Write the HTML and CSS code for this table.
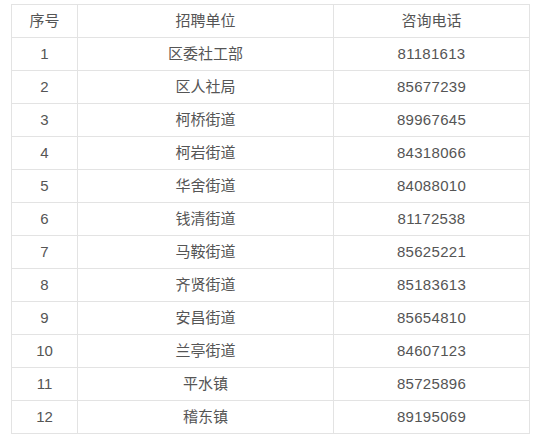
FILE: index.html
```html
<!DOCTYPE html>
<html lang="zh">
<head>
<meta charset="utf-8">
<link rel="stylesheet" href="styles.css">
</head>
<body>
<table class="tbl">
<colgroup><col class="c1"><col class="c2"><col class="c3"></colgroup>
<tr><td>序号</td><td>招聘单位</td><td>咨询电话</td></tr>
<tr><td>1</td><td>区委社工部</td><td class="num">81181613</td></tr>
<tr><td>2</td><td>区人社局</td><td class="num">85677239</td></tr>
<tr><td>3</td><td>柯桥街道</td><td class="num">89967645</td></tr>
<tr><td>4</td><td>柯岩街道</td><td class="num">84318066</td></tr>
<tr><td>5</td><td>华舍街道</td><td class="num">84088010</td></tr>
<tr><td>6</td><td>钱清街道</td><td class="num">81172538</td></tr>
<tr><td>7</td><td>马鞍街道</td><td class="num">85625221</td></tr>
<tr><td>8</td><td>齐贤街道</td><td class="num">85183613</td></tr>
<tr><td>9</td><td>安昌街道</td><td class="num">85654810</td></tr>
<tr><td>10</td><td>兰亭街道</td><td class="num">84607123</td></tr>
<tr><td>11</td><td>平水镇</td><td class="num">85725896</td></tr>
<tr><td>12</td><td>稽东镇</td><td class="num">89195069</td></tr>
</table>
</body>
</html>
```
FILE: styles.css
```css
html, body {
  margin: 0;
  padding: 0;
  background: #fff;
}
body {
  padding: 4px 0 0 11px;
  font-family: "Liberation Sans", "Noto Sans CJK SC", sans-serif;
  font-size: 15px;
  color: #555;
}
.tbl {
  border-collapse: collapse;
  table-layout: fixed;
  width: 518px;
}
.c1 { width: 66px; }
.c2 { width: 256px; }
.c3 { width: 196px; }
.tbl td {
  border: 1px solid #e3e3e3;
  height: 32px;
  padding: 0;
  text-align: center;
  vertical-align: middle;
  line-height: 20px;
}
.tbl td.num {
  letter-spacing: 0.3px;
}
```
